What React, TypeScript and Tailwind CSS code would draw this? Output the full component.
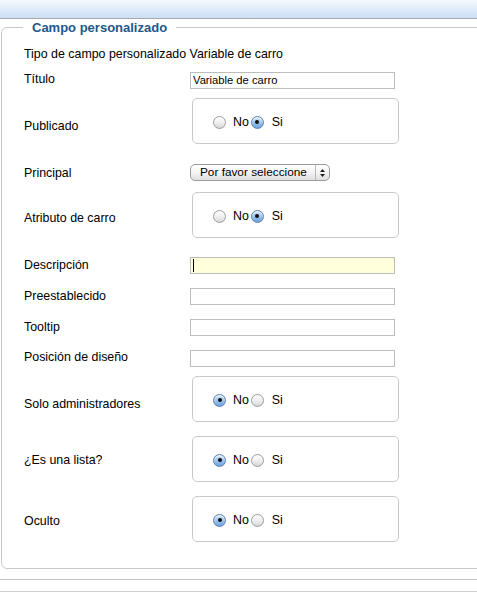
import React from 'react'

const font = { fontFamily: '"Liberation Sans", Arial, Helvetica, sans-serif' }

function Radio({ checked }: { checked: boolean }) {
  return checked ? (
    <span className="inline-flex h-[13px] w-[13px] shrink-0 items-center justify-center rounded-full border border-[#5b7fae] bg-gradient-to-b from-[#d8eafb] via-[#9cc4ee] to-[#6da3dc] shadow-[inset_0_1px_1px_rgba(255,255,255,0.8)]">
      <span className="h-[4px] w-[4px] rounded-full bg-[#111]" />
    </span>
  ) : (
    <span className="inline-block h-[13px] w-[13px] shrink-0 rounded-full border border-[#9d9d9d] bg-gradient-to-b from-[#fdfdfd] via-[#f0f0f0] to-[#d6d6d6]" />
  )
}

function RadioBox({ yes }: { yes: boolean }) {
  return (
    <div className="ml-[2px] flex h-[46px] w-[207px] items-center rounded-[5px] border border-[#c9c9c9] pl-[20px] pt-[2px] text-[12.4px] text-black">
      <Radio checked={!yes} />
      <span className="ml-[7px]">No</span>
      <span className="ml-[2px]" />
      <Radio checked={yes} />
      <span className="ml-[8px]">Si</span>
    </div>
  )
}

function TextBox({ value, active }: { value?: string; active?: boolean }) {
  return (
    <div
      className={`relative flex h-[17px] w-[205px] items-center border border-[#bdbdbd] pl-[2px] text-[11.2px] text-black ${
        active ? 'bg-[#ffffdc]' : 'bg-white'
      }`}
    >
      {value}
      {active && <span className="h-[13px] w-[1px] bg-black" />}
    </div>
  )
}

function Row({
  label,
  mt,
  labelPt,
  children,
}: {
  label: string
  mt: string
  labelPt: string
  children: React.ReactNode
}) {
  return (
    <div className={`flex items-start ${mt}`}>
      <div className={`w-[166px] shrink-0 text-[12.4px] leading-[14px] text-black ${labelPt}`}>{label}</div>
      {children}
    </div>
  )
}

export default function App() {
  return (
    <div className="h-[607px] w-full overflow-hidden bg-white" style={font}>
      <div className="h-[18px] bg-gradient-to-b from-[#f4f9fe] to-[#cbe0f6]" />
      <div className="h-px bg-[#a9a9a9]" />

      <fieldset className="ml-[1px] mt-[1px] w-[520px] rounded-[6px] border border-[#c9c9c9] pb-[26px] pl-[22px]">
        <legend className="-ml-[1px] px-[9px] text-[13px] font-bold leading-[15px] text-[#23578a]">
          Campo personalizado
        </legend>

        <div className="mt-[12px] text-[12.4px] leading-[14px] text-black">
          Tipo de campo personalizado Variable de carro
        </div>

        <Row label="Título" mt="mt-[11px]" labelPt="pt-0">
          <TextBox value="Variable de carro" />
        </Row>

        <Row label="Publicado" mt="mt-[9px]" labelPt="pt-[21px]">
          <RadioBox yes />
        </Row>

        <Row label="Principal" mt="mt-[20px]" labelPt="pt-[2px]">
          <div className="flex h-[17px] w-[140px] items-center rounded-[5px] border border-[#9c9c9c] bg-gradient-to-b from-[#ffffff] via-[#f4f4f4] to-[#dedede] text-[11.8px] text-black">
            <span className="flex-1 pl-[9px]">Por favor seleccione</span>
            <span className="flex h-full w-[14px] flex-col items-center justify-center gap-[2px] border-l border-[#b9b9b9]">
              <svg width="5" height="3" viewBox="0 0 5 3">
                <path d="M0 3 L2.5 0 L5 3 Z" fill="#222" />
              </svg>
              <svg width="5" height="3" viewBox="0 0 5 3">
                <path d="M0 0 L5 0 L2.5 3 Z" fill="#222" />
              </svg>
            </span>
          </div>
        </Row>

        <Row label="Atributo de carro" mt="mt-[11px]" labelPt="pt-[19px]">
          <RadioBox yes />
        </Row>

        <Row label="Descripción" mt="mt-[19px]" labelPt="pt-[1px]">
          <TextBox active />
        </Row>

        <Row label="Preestablecido" mt="mt-[14px]" labelPt="pt-[1px]">
          <TextBox />
        </Row>

        <Row label="Tooltip" mt="mt-[14px]" labelPt="pt-[1px]">
          <TextBox />
        </Row>

        <Row label="Posición de diseño" mt="mt-[14px]" labelPt="pt-0">
          <TextBox />
        </Row>

        <Row label="Solo administradores" mt="mt-[9px]" labelPt="pt-[21px]">
          <RadioBox yes={false} />
        </Row>

        <Row label="¿Es una lista?" mt="mt-[14px]" labelPt="pt-[17px]">
          <RadioBox yes={false} />
        </Row>

        <Row label="Oculto" mt="mt-[14px]" labelPt="pt-[18px]">
          <RadioBox yes={false} />
        </Row>
      </fieldset>

      <div className="mt-[10px] h-px bg-[#c4c4c4]" />
      <div className="mt-[11px] h-px bg-[#d0d0d0]" />
    </div>
  )
}
